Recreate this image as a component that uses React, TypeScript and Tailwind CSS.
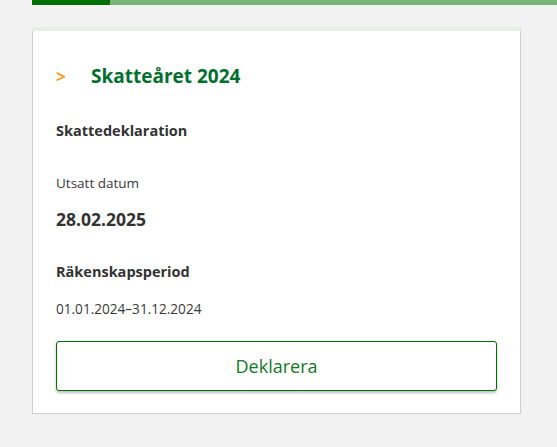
export default function App() {
  return (
    <div
      className="min-h-[447px] w-full bg-[#f2f2f2] pl-[32px] text-[#333]"
      style={{ fontFamily: '"Open Sans", "Noto Sans", Arial, sans-serif' }}
    >
      <div className="flex h-[5px] w-full">
        <div className="w-[78px] bg-[#007000]" />
        <div className="flex-1 bg-[#78b478]" />
      </div>

      <div className="mt-[22px] w-[489px] border-x border-b border-[#cfcfcf] bg-white">
        <div className="h-[4px] bg-[#e3f0e3] -mx-px" />
        <div className="px-[23px] pt-[33px] pb-[22px]">
          <div className="flex items-center">
            <span className="w-[35px] text-[17px] font-bold leading-none text-[#f5a030]">&gt;</span>
            <h2 className="text-[19px] font-bold leading-[25px] text-[#00702f]">Skatteåret 2024</h2>
          </div>

          <div className="mt-[32px] text-[14.5px] font-bold leading-[20px]">Skattedeklaration</div>

          <div className="mt-[32px] text-[13.5px] leading-[20px] text-[#3a3a3a]">Utsatt datum</div>
          <div className="mt-[14px] text-[17.5px] font-bold leading-[24px]">28.02.2025</div>

          <div className="mt-[31px] text-[14.5px] font-bold leading-[20px]">Räkenskapsperiod</div>
          <div className="mt-[17px] text-[13.6px] leading-[20px] text-[#3a3a3a]">01.01.2024–31.12.2024</div>

          <button className="mt-[22px] flex h-[50px] w-full items-center justify-center rounded-[3px] border border-[#007000] bg-white text-[18px] text-[#0f7a1f] shadow-[0_2px_3px_rgba(0,0,0,0.25)]">
            Deklarera
          </button>
        </div>
      </div>
    </div>
  );
}
